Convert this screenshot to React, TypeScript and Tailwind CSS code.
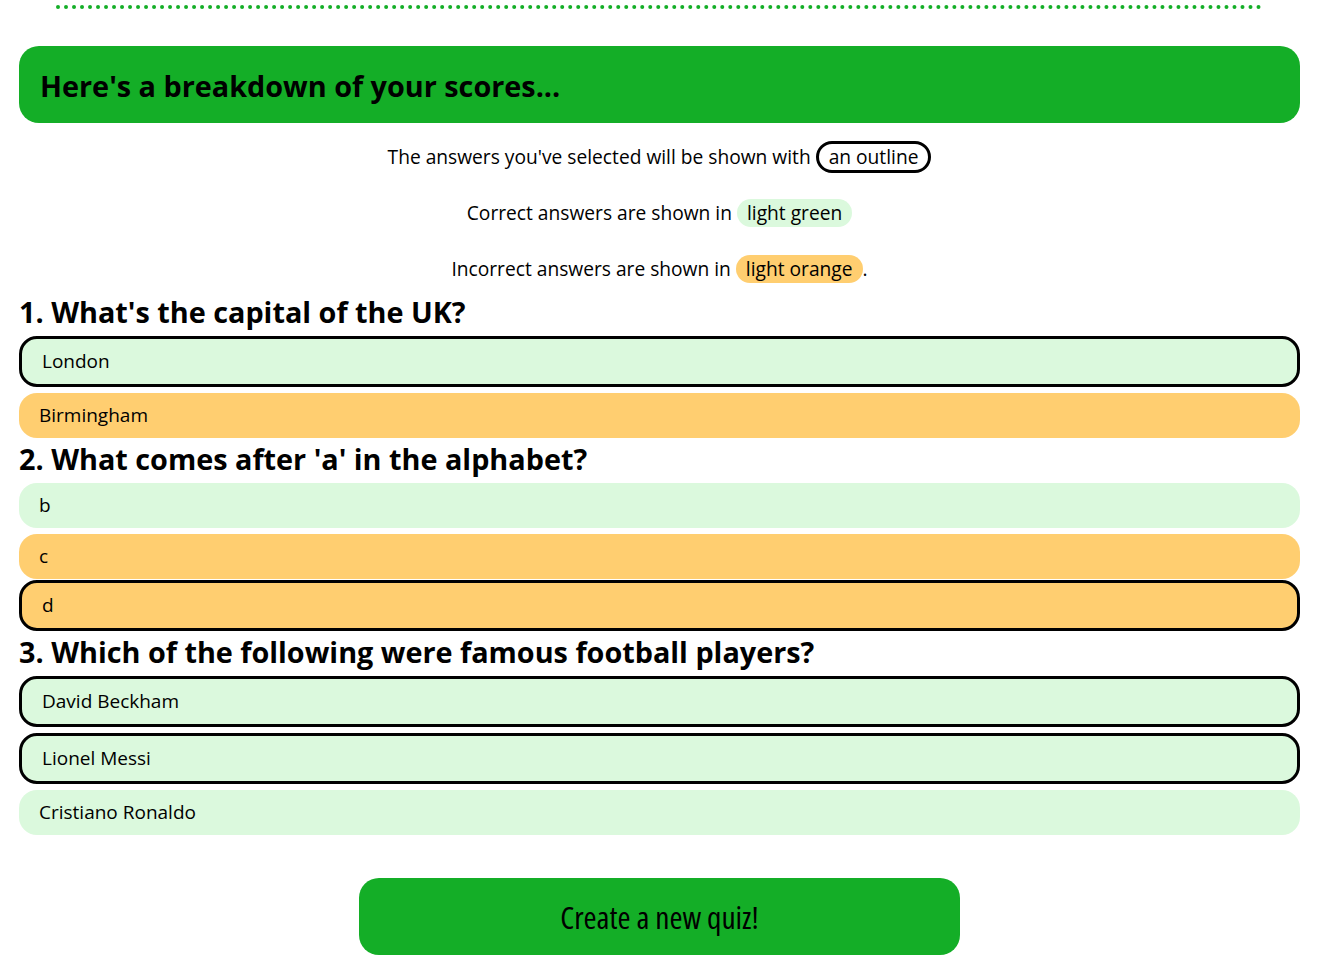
// Quiz results breakdown

interface Answer {
  text: string;
  correct: boolean;
  selected: boolean;
}

interface Question {
  title: string;
  answers: Answer[];
}

const questions: Question[] = [
  {
    title: "1. What's the capital of the UK?",
    answers: [
      { text: 'London', correct: true, selected: true },
      { text: 'Birmingham', correct: false, selected: false },
    ],
  },
  {
    title: "2. What comes after 'a' in the alphabet?",
    answers: [
      { text: 'b', correct: true, selected: false },
      { text: 'c', correct: false, selected: false },
      { text: 'd', correct: false, selected: true },
    ],
  },
  {
    title: '3. Which of the following were famous football players?',
    answers: [
      { text: 'David Beckham', correct: true, selected: true },
      { text: 'Lionel Messi', correct: true, selected: true },
      { text: 'Cristiano Ronaldo', correct: true, selected: false },
    ],
  },
];

export default function App() {
  return (
    <div className="min-h-screen bg-white text-black font-['Open_Sans',_'Noto_Sans',_sans-serif]">
      <div className="pt-[5px]">
        <div className="ml-[56px] w-[1206px] border-t-4 border-dotted border-[#14ae27]" />
      </div>

      <div className="ml-[19px] mr-[17px]">
        <div className="mt-[37px] h-[77px] rounded-[20px] bg-[#14ae27] px-[21px] flex items-center">
          <h1 className="text-[28.8px] font-bold leading-none pt-[3px]">Here's a breakdown of your scores...</h1>
        </div>

        <div className="mt-[6px] text-[19.2px]">
          <p className="h-[56px] flex items-center justify-center">
            The answers you've selected will be shown with&nbsp;
            <span className="inline-block rounded-full border-[3px] border-black px-[10px] leading-[25px] pb-[1px]">an outline</span>
          </p>
          <p className="h-[56px] flex items-center justify-center">
            Correct answers are shown in&nbsp;
            <span className="inline-block rounded-full bg-[#dbf9dd] px-[10px] leading-[27px] pb-[1px]">light green</span>
          </p>
          <p className="h-[56px] flex items-center justify-center">
            Incorrect answers are shown in&nbsp;
            <span className="inline-block rounded-full bg-[#ffce70] px-[10px] leading-[27px] pb-[1px]">light orange</span>.
          </p>
        </div>

        {questions.map((q) => (
          <div key={q.title}>
            <h2 className="text-[28.8px] font-bold leading-[30px] mb-[9px]">{q.title}</h2>
            {q.answers.map((a, i) => {
              // the selected "d" sits right under "c" in the reference
              const tight = a.selected && i > 0 && !q.answers[i - 1].selected && !q.answers[i - 1].correct;
              return (
                <div
                  key={a.text}
                  className={[
                    'flex items-center rounded-[18px] px-5 text-[19px]',
                    a.correct ? 'bg-[#dbf9dd]' : 'bg-[#ffce70]',
                    a.selected ? 'h-[51px] border-[3px] border-black' : 'h-[45px]',
                    tight ? 'mt-[-5px] mb-[6px]' : 'mb-[6px]',
                  ].join(' ')}
                >
                  {a.text}
                </div>
              );
            })}
          </div>
        ))}

        <button
          type="button"
          className="mt-[43px] mx-auto flex items-center justify-center w-[601px] h-[77px] rounded-[20px] bg-[#14ae27] text-[31.5px] font-stretch-condensed"
        >
          Create a new quiz!
        </button>
      </div>
    </div>
  );
}
